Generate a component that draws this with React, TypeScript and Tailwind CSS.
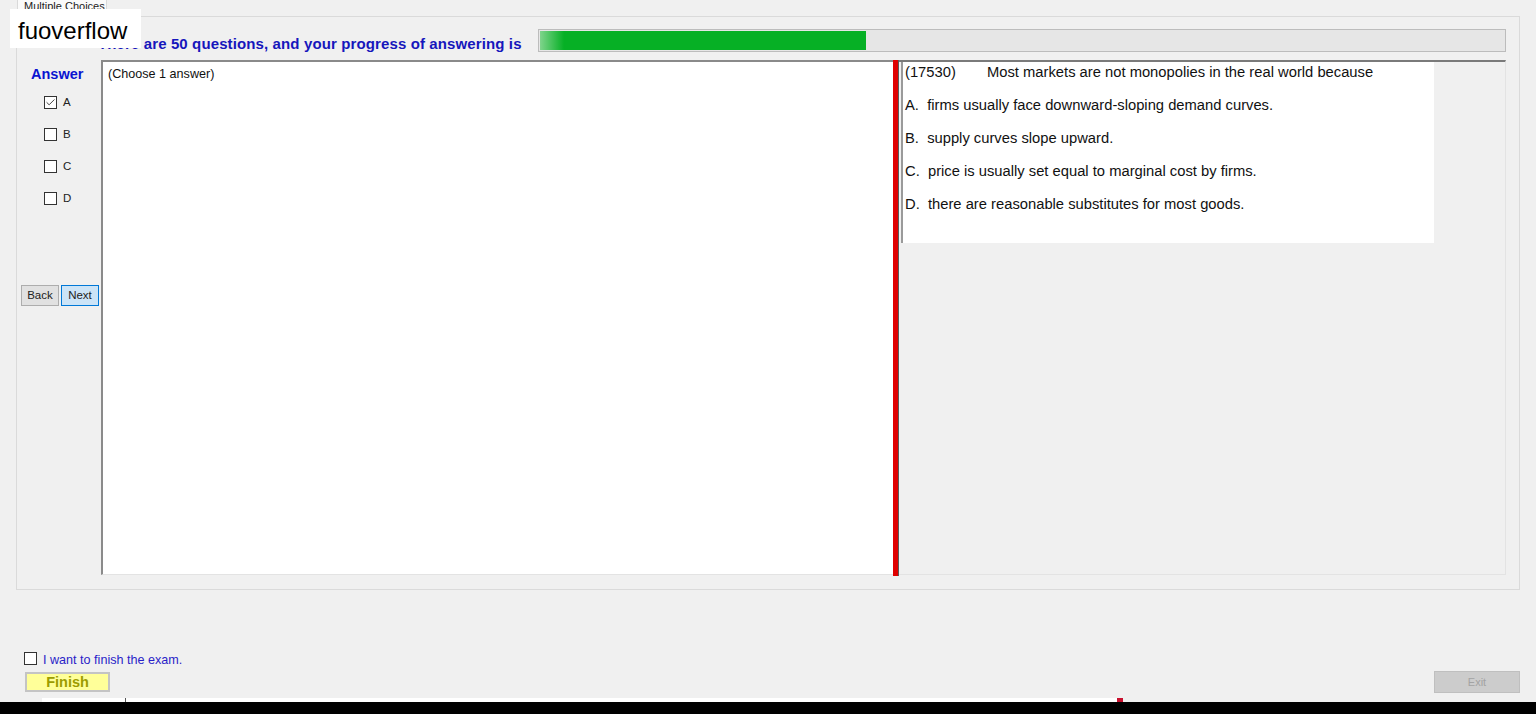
import { Check } from 'lucide-react';

const font = "font-['Liberation_Sans',Arial,sans-serif]";

function Box({ checked }: { checked?: boolean }) {
  return (
    <div className="w-[13px] h-[13px] border border-[#333333] bg-white flex items-center justify-center shrink-0">
      {checked && <Check className="w-[11px] h-[11px] text-[#333333]" strokeWidth={2} />}
    </div>
  );
}

const options = ['A', 'B', 'C', 'D'];

const choices = [
  'A.  firms usually face downward-sloping demand curves.',
  'B.  supply curves slope upward.',
  'C.  price is usually set equal to marginal cost by firms.',
  'D.  there are reasonable substitutes for most goods.',
];

export default function App() {
  return (
    <div className={`${font} relative w-[1536px] h-[714px] bg-[#f0f0f0] flex flex-col overflow-hidden text-black`}>
      {/* tab header */}
      <div className="h-[16px] pl-[17px] flex">
        <div className="w-[90px] h-[17px] -mt-[1px] bg-[#fafafa] border border-[#d9d9d9] border-b-0 text-[11px] leading-[12px] pl-[6px] text-[#222222]">
          Multiple Choices
        </div>
      </div>

      {/* tab page */}
      <div className="ml-[16px] w-[1504px] h-[574px] border border-[#dadada] flex flex-col pt-[12px]">
        <div className="flex h-[23px]">
          <div className="w-[521px] pl-[81px] pt-[6px] text-[15px] leading-[17px] tracking-[0.12px] font-bold text-[#1616bc] whitespace-nowrap">
            There are 50 questions, and your progress of answering is
          </div>
          <div className="w-[968px] h-[23px] border border-[#bcbcbc] bg-[#e6e6e6] p-px">
            <div className="w-[326px] h-full bg-[linear-gradient(90deg,#7fd48c_0px,#06b025_24px,#06b025_100%)]" />
          </div>
        </div>

        <div className="mt-[8px] h-[515px] flex">
          {/* answer column */}
          <div className="w-[84px] flex flex-col">
            <div className="pl-[14px] pt-[6px] text-[14.5px] leading-[17px] font-bold text-[#0a14d0]">Answer</div>
            <div className="flex flex-col gap-[19px] pl-[27px] mt-[13px]">
              {options.map((o, i) => (
                <div key={o} className="flex items-center gap-[6px] h-[13px]">
                  <Box checked={i === 0} />
                  <span className="text-[11.5px] leading-[13px] text-[#222222]">{o}</span>
                </div>
              ))}
            </div>
            <div className="flex gap-[2px] pl-[4px] mt-[80px]">
              <button className="w-[38px] h-[21px] bg-[#e1e1e1] border border-[#adadad] text-[11.5px] text-[#222222]">Back</button>
              <button className="w-[38px] h-[21px] bg-[#cce4f7] border border-[#0078d7] text-[11.5px] text-[#222222]">Next</button>
            </div>
          </div>

          {/* question text */}
          <div className="w-[792px] bg-white border-t-2 border-l-2 border-[#8a8a8a] border-b border-b-[#e3e3e3] pl-[5px] pt-[4px] text-[12.6px] leading-[16px] text-[#111111]">
            (Choose 1 answer)
          </div>

          {/* splitter */}
          <div className="w-[6px] h-[516px] bg-[#e00000] border-r border-[#5a5a5a]" />

          {/* choices panel */}
          <div className="w-[607px] border-t-2 border-[#7a7a7a] border-r border-r-[#e3e3e3] border-b border-b-[#e3e3e3]">
            <div className="ml-[2px] w-[533px] h-[181px] bg-white border-l-2 border-[#9a9a9a] pl-[2px] flex flex-col gap-[13px] text-[14.75px] leading-[20px] text-[#111111]">
              <div className="whitespace-nowrap">
                <span className="inline-block w-[82px]">(17530)</span>Most markets are not monopolies in the real world because
              </div>
              {choices.map(c => (
                <div key={c} className="whitespace-pre">{c}</div>
              ))}
            </div>
          </div>
        </div>
      </div>

      {/* finish area */}
      <div className="mt-[62px] pl-[24px] flex items-center gap-[6px] h-[13px]">
        <Box />
        <span className="text-[12.6px] leading-[14px] text-[#2a1ec8] pt-[2px]">I want to finish the exam.</span>
      </div>
      <div className="mt-[6px] h-[22px] flex items-center justify-between pl-[25px] pr-[16px]">
        <button className="w-[85px] h-[20px] bg-[#ffff99] border-2 border-[#c4c4c4] text-[14.5px] leading-[15px] font-bold text-[#9c9c00]">
          Finish
        </button>
        <button className="w-[86px] h-[22px] bg-[#cccccc] border border-[#bfbfbf] text-[11px] text-[#a3a3a3]">
          Exit
        </button>
      </div>
      <div className="mt-[5px] h-[4px] flex">
        <div className="ml-[42px] w-[1078px] h-[4px] bg-white relative">
          <div className="absolute left-[83px] top-0 w-px h-[4px] bg-[#555555]" />
          <div className="absolute left-[1075px] top-0 w-[6px] h-[4px] bg-[#c8102e]" />
        </div>
      </div>
      <div className="h-[12px] bg-black" />

      {/* watermark */}
      <div className="absolute left-[10px] top-[9px] w-[131px] h-[39px] bg-white text-[24px] leading-[28px] pl-[8px] pt-[8px] text-black">
        fuoverflow
      </div>
    </div>
  );
}
